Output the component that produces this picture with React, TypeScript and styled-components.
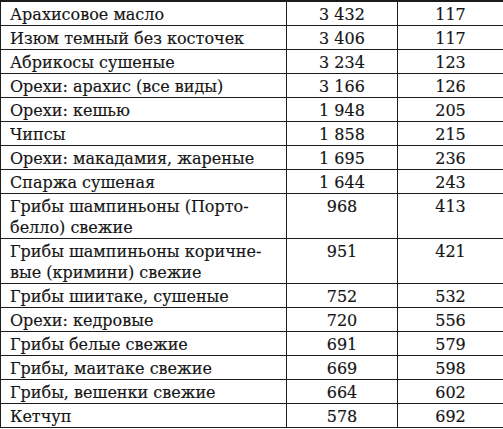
import React from "react";
import styled, { createGlobalStyle } from "styled-components";

const GlobalStyle = createGlobalStyle`
  html, body {
    margin: 0;
    padding: 0;
    background: #ffffff;
  }
`;

const Table = styled.table`
  border-collapse: collapse;
  table-layout: fixed;
  width: 503px;
  font-family: "DejaVu Serif", "Liberation Serif", serif;
  font-size: 16px;
  color: #151515;
  -webkit-text-stroke: 0.15px #151515;
  border-top: 2px solid #1c1c1c;
`;

const Column = styled.col<{ $width: number }>`
  width: ${(props) => props.$width}px;
`;

const Cell = styled.td<{ $numeric?: boolean }>`
  border: 1px solid #1c1c1c;
  padding: 2px ${(props) => (props.$numeric ? "0" : "9px")} 0;
  line-height: 21px;
  vertical-align: top;
  text-align: ${(props) => (props.$numeric ? "center" : "left")};
  white-space: ${(props) => (props.$numeric ? "nowrap" : "normal")};
`;

type Row = { name: React.ReactNode; weight: string; kcal: string };

const rows: Row[] = [
  { name: "Арахисовое масло", weight: "3 432", kcal: "117" },
  { name: "Изюм темный без косточек", weight: "3 406", kcal: "117" },
  { name: "Абрикосы сушеные", weight: "3 234", kcal: "123" },
  { name: "Орехи: арахис (все виды)", weight: "3 166", kcal: "126" },
  { name: "Орехи: кешью", weight: "1 948", kcal: "205" },
  { name: "Чипсы", weight: "1 858", kcal: "215" },
  { name: "Орехи: макадамия, жареные", weight: "1 695", kcal: "236" },
  { name: "Спаржа сушеная", weight: "1 644", kcal: "243" },
  {
    name: (
      <>
        Грибы шампиньоны (Порто-
        <br />
        белло) свежие
      </>
    ),
    weight: "968",
    kcal: "413",
  },
  {
    name: (
      <>
        Грибы шампиньоны коричне-
        <br />
        вые (кримини) свежие
      </>
    ),
    weight: "951",
    kcal: "421",
  },
  { name: "Грибы шиитаке, сушеные", weight: "752", kcal: "532" },
  { name: "Орехи: кедровые", weight: "720", kcal: "556" },
  { name: "Грибы белые свежие", weight: "691", kcal: "579" },
  { name: "Грибы, маитаке свежие", weight: "669", kcal: "598" },
  { name: "Грибы, вешенки свежие", weight: "664", kcal: "602" },
  { name: "Кетчуп", weight: "578", kcal: "692" },
];

const App = () => {
  return (
    <>
      <GlobalStyle />
      <Table>
        <colgroup>
          <Column $width={286} />
          <Column $width={111} />
          <Column $width={106} />
        </colgroup>
        <tbody>
          {rows.map((row, i) => (
            <tr key={i}>
              <Cell>{row.name}</Cell>
              <Cell $numeric>{row.weight}</Cell>
              <Cell $numeric>{row.kcal}</Cell>
            </tr>
          ))}
        </tbody>
      </Table>
    </>
  );
};

export default App;
